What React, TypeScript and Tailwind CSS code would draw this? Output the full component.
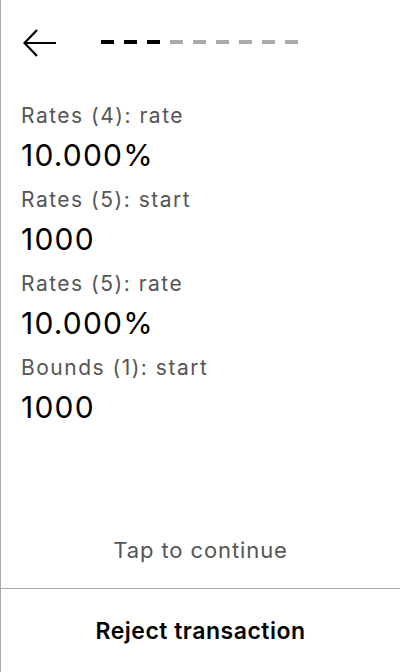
const fields = [
  { label: "Rates (4): rate", value: "10.000%" },
  { label: "Rates (5): start", value: "1000" },
  { label: "Rates (5): rate", value: "10.000%" },
  { label: "Bounds (1): start", value: "1000" },
];

const steps = [true, true, true, false, false, false, false, false, false];

const App = () => {
  return (
    <div
      className="w-[400px] h-[672px] flex flex-col bg-white border-l border-[#aaaaaa] text-black"
      style={{ fontFamily: "Inter, 'Noto Sans', sans-serif" }}
    >
      <div className="flex items-center pl-[22px] pt-[29px]">
        <svg width="34" height="28" viewBox="0 0 34 28" fill="none">
          <path
            d="M14 1 L1.5 14 L14 27 M1.5 14 H33"
            stroke="black"
            strokeWidth="2.2"
          />
        </svg>
        <div className="flex gap-[10px] ml-[44px] -mt-[2px]">
          {steps.map((done, i) => (
            <div
              key={i}
              className={
                done ? "w-[13px] h-[4px] bg-black" : "w-[13px] h-[4px] bg-[#aaaaaa]"
              }
            />
          ))}
        </div>
      </div>

      <div className="flex flex-col gap-[13px] pl-[20px] mt-[45px]">
        {fields.map((f) => (
          <div key={f.label} className="flex flex-col">
            <div className="text-[21px] leading-[28px] tracking-[1.5px] text-[#555555]">
              {f.label}
            </div>
            <div className="text-[30px] leading-[36px] tracking-[1.2px] mt-[7px]">
              {f.value}
            </div>
          </div>
        ))}
      </div>

      <div className="flex-1" />

      <div className="text-center text-[22px] leading-[28px] tracking-[0.9px] text-[#555555] pb-[24px]">
        Tap to continue
      </div>

      <div className="border-t border-[#aaaaaa] h-[84px] flex items-center justify-center">
        <span className="text-[23px] leading-[28px] tracking-[0.5px] font-semibold">
          Reject transaction
        </span>
      </div>
    </div>
  );
};

export default App;
